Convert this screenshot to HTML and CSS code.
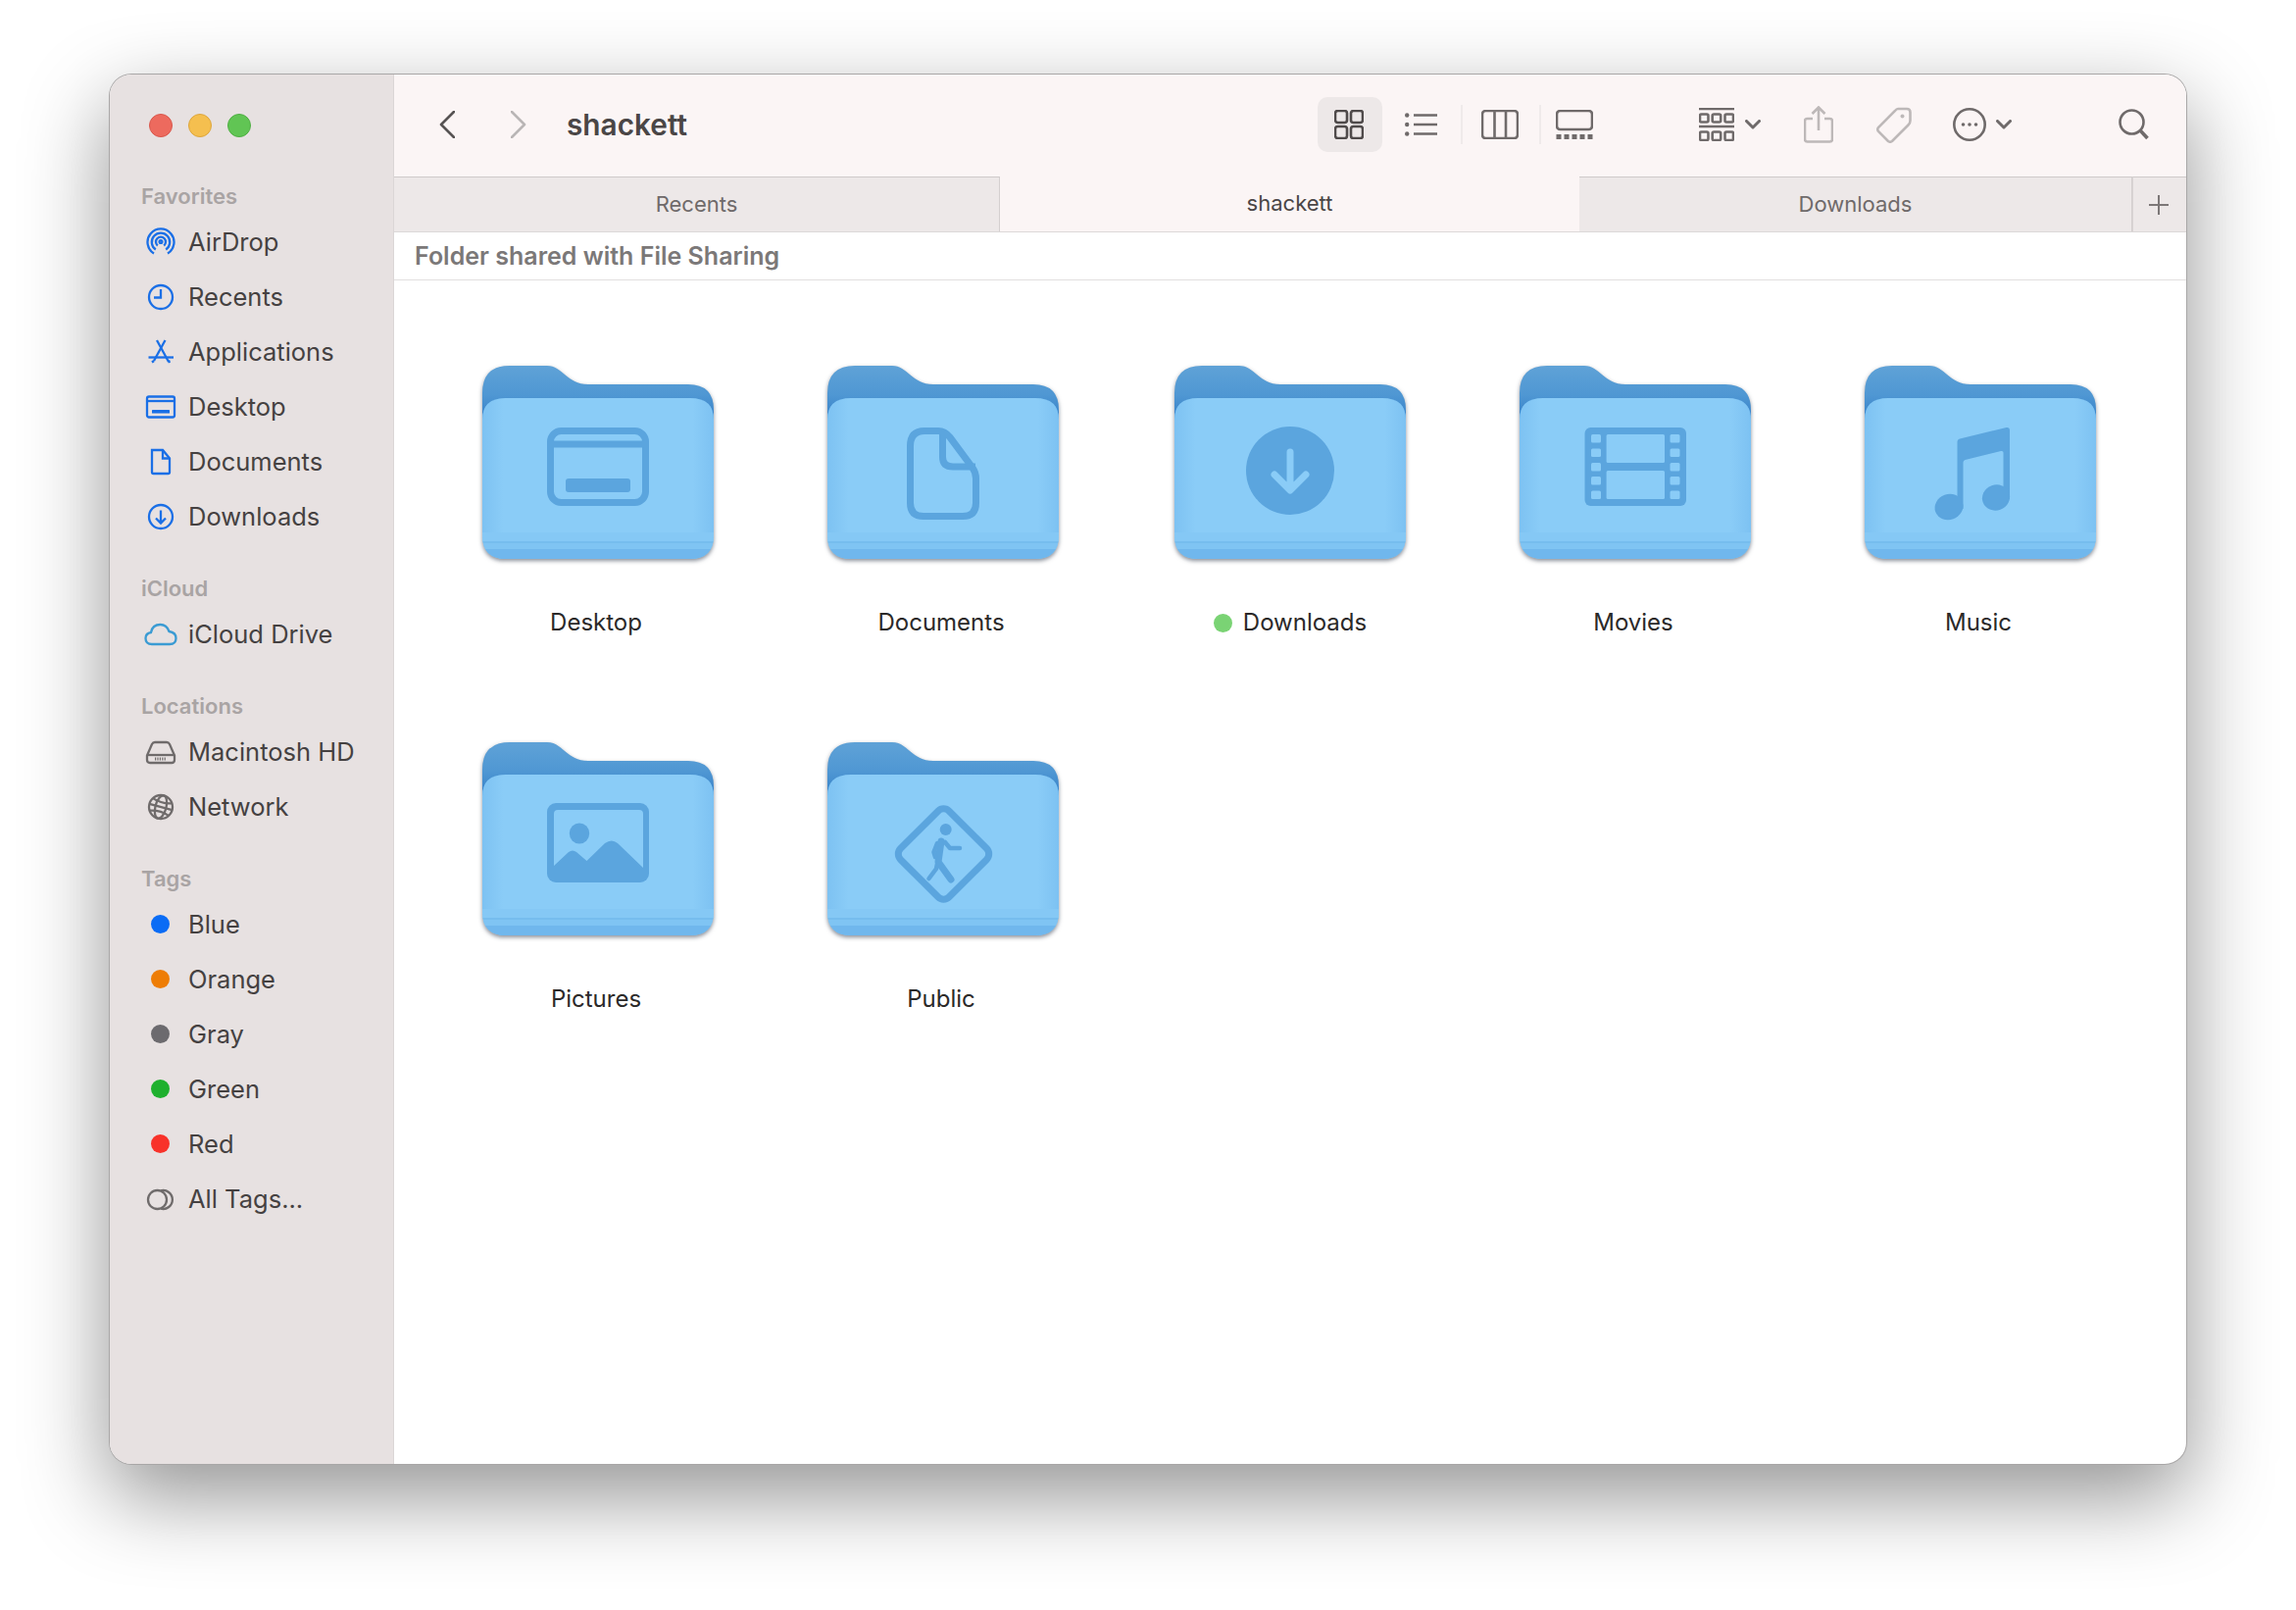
FILE: index.html
```html
<!DOCTYPE html>
<html lang="en">
<head>
<meta charset="UTF-8">
<meta name="viewport" content="width=device-width, initial-scale=1.0">
<title>shackett</title>
<link rel="stylesheet" href="styles.css">
</head>
<body>

<svg class="defs" aria-hidden="true">
    <defs>
        <linearGradient id="folderBack" x1="0" y1="0" x2="0" y2="1">
            <stop offset="0" stop-color="#5fa2d7"/>
            <stop offset="0.25" stop-color="#4f97d3"/>
            <stop offset="0.42" stop-color="#3a84ca"/>
            <stop offset="1" stop-color="#3a84ca"/>
        </linearGradient>
        <linearGradient id="folderSide" x1="0" y1="0" x2="1" y2="0">
            <stop offset="0" stop-color="#6db5ec" stop-opacity="0.45"/>
            <stop offset="0.09" stop-color="#6db5ec" stop-opacity="0"/>
            <stop offset="0.91" stop-color="#6db5ec" stop-opacity="0"/>
            <stop offset="1" stop-color="#6db5ec" stop-opacity="0.45"/>
        </linearGradient>
        <clipPath id="folderFront">
            <path d="M0 55Q0 33 24 33H212Q236 33 236 55V173Q236 197 212 197H24Q0 197 0 173Z"/>
        </clipPath>
        <symbol id="folder" viewBox="0 0 236 197">
            <path fill="url(#folderBack)" d="M0 28Q0 0 28 0H66C82 0 86 19 108 19H210Q236 19 236 45V120H0Z"/>
            <g clip-path="url(#folderFront)">
                <rect width="236" height="197" fill="#8accf7"/>
                <rect width="236" height="172" fill="url(#folderSide)"/>
                <rect y="170" width="236" height="9" fill="#85c8f5"/>
                <rect y="179" width="236" height="2" fill="#76bdee"/>
                <rect y="181" width="236" height="6" fill="#7fc4f3"/>
                <rect y="187" width="236" height="10" fill="#70b7ed"/>
            </g>
        </symbol>
    </defs>
</svg>

<div class="window">
    <aside class="sidebar">
        <div class="lights">
            <span class="light red"></span>
            <span class="light yellow"></span>
            <span class="light green"></span>
        </div>

        <h4>Favorites</h4>
        <div class="side-item">
            <svg class="side-icon" viewBox="0 0 30 30">
                <path d="M8 26.5A13.5 13.5 0 1 1 22 26.5"/>
                <path d="M9.8 22.5A9.2 9.2 0 1 1 20.2 22.5"/>
                <path d="M11.8 18.5A5 5 0 1 1 18.2 18.5"/>
                <circle cx="15" cy="14.5" r="1.4"/>
            </svg>
            <span>AirDrop</span>
        </div>
        <div class="side-item">
            <svg class="side-icon" viewBox="0 0 30 30">
                <circle cx="15" cy="15" r="12"/>
                <path d="M15 7V15.5H8"/>
            </svg>
            <span>Recents</span>
        </div>
        <div class="side-item">
            <svg class="side-icon" viewBox="0 0 30 30">
                <path d="M11 3L23 25"/>
                <path d="M19.5 3L8 24"/>
                <path d="M2.5 20.5H28"/>
                <path d="M6 25.5L8 24M24 26L23 23.5"/>
            </svg>
            <span>Applications</span>
        </div>
        <div class="side-item">
            <svg class="side-icon" viewBox="0 0 30 30">
                <rect x="1" y="4.5" width="28" height="21" rx="2"/>
                <path d="M1 9H29"/>
                <rect class="solid" x="6" y="18" width="18" height="3.5" rx="0.5"/>
            </svg>
            <span>Desktop</span>
        </div>
        <div class="side-item">
            <svg class="side-icon" viewBox="0 0 30 30">
                <path d="M6 3H17L24 11.5V25.5Q24 27 22.5 27H7.5Q6 27 6 25.5Z"/>
                <path d="M17 3V11.5H24"/>
            </svg>
            <span>Documents</span>
        </div>
        <div class="side-item">
            <svg class="side-icon" viewBox="0 0 30 30">
                <circle cx="15" cy="15" r="12"/>
                <path d="M15 8.5V21M10 16.5L15 21.5L20 16.5"/>
            </svg>
            <span>Downloads</span>
        </div>

        <h4>iCloud</h4>
        <div class="side-item">
            <svg class="side-icon cloud" viewBox="0 0 34 30">
                <path d="M8 25Q1.5 25 1.5 19Q1.5 14 7 13Q8.5 5 16.5 5Q23 5 25.5 12Q32.5 13 32.5 19Q32.5 25 26 25Z"/>
            </svg>
            <span>iCloud Drive</span>
        </div>

        <h4>Locations</h4>
        <div class="side-item">
            <svg class="side-icon gray" viewBox="0 0 30 30">
                <path d="M1 18.5L6 7Q7 5 9 5H21Q23 5 24 7L29 18.5V23Q29 26 26 26H4Q1 26 1 23Z"/>
                <path d="M1.5 18H28.5"/>
                <path d="M9 22H21" stroke-dasharray="1.2 1.2" stroke-width="3"/>
            </svg>
            <span>Macintosh HD</span>
        </div>
        <div class="side-item">
            <svg class="side-icon gray" viewBox="0 0 30 30">
                <circle cx="15" cy="15" r="12"/>
                <ellipse cx="15" cy="15" rx="5.5" ry="12" transform="rotate(15 15 15)"/>
                <path d="M3 15H27M5 8.5Q15 12 25 8.5M5 21.5Q15 18 25 21.5" transform="rotate(15 15 15)"/>
            </svg>
            <span>Network</span>
        </div>

        <h4 class="tags-head">Tags</h4>
        <div class="side-item"><span class="tag-slot"><i class="tag-dot blue"></i></span><span>Blue</span></div>
        <div class="side-item"><span class="tag-slot"><i class="tag-dot orange"></i></span><span>Orange</span></div>
        <div class="side-item"><span class="tag-slot"><i class="tag-dot graytag"></i></span><span>Gray</span></div>
        <div class="side-item"><span class="tag-slot"><i class="tag-dot greentag"></i></span><span>Green</span></div>
        <div class="side-item"><span class="tag-slot"><i class="tag-dot redtag"></i></span><span>Red</span></div>
        <div class="side-item">
            <svg class="side-icon gray" viewBox="0 0 30 30">
                <circle cx="11.5" cy="15.5" r="9.5"/>
                <path d="M15 6.3A9.5 9.5 0 1 1 15 24.7"/>
            </svg>
            <span>All Tags...</span>
        </div>
    </aside>

    <main class="main">
        <div class="toolbar">
            <svg class="nav-btn" viewBox="0 0 16 28"><path d="M15 1L2 14L15 27"/></svg>
            <svg class="nav-btn next" viewBox="0 0 16 28"><path d="M1 1L14 14L1 27"/></svg>
            <div class="title">shackett</div>

            <div class="view-on">
                <svg class="tool w30 dark" viewBox="0 0 30 30">
                    <rect x="1" y="1" width="12" height="12" rx="2.5"/>
                    <rect x="17" y="1" width="12" height="12" rx="2.5"/>
                    <rect x="1" y="17" width="12" height="12" rx="2.5"/>
                    <rect x="17" y="17" width="12" height="12" rx="2.5"/>
                </svg>
            </div>
            <svg class="tool w33 list-icon" viewBox="0 0 33 24">
                <path d="M9 2.5H33M9 12H33M9 21.5H33"/>
                <circle class="solid" cx="2.2" cy="2.5" r="2.2"/>
                <circle class="solid" cx="2.2" cy="12" r="2.2"/>
                <circle class="solid" cx="2.2" cy="21.5" r="2.2"/>
            </svg>
            <span class="tool-sep first"></span>
            <svg class="tool w38 cols-icon" viewBox="0 0 38 30">
                <rect x="1" y="1" width="36" height="28" rx="3.5"/>
                <path d="M13.5 1V29M25 1V29"/>
            </svg>
            <span class="tool-sep second"></span>
            <svg class="tool w38 gallery-icon" viewBox="0 0 38 30">
                <rect x="1" y="1" width="36" height="19" rx="3.5"/>
                <rect class="solid" x="0.5" y="25" width="5" height="5"/>
                <rect class="solid" x="8.5" y="25" width="5" height="5"/>
                <rect class="solid" x="16.5" y="25" width="5" height="5"/>
                <rect class="solid" x="24.5" y="25" width="5" height="5"/>
                <rect class="solid" x="32.5" y="25" width="5" height="5"/>
            </svg>

            <svg class="tool w36 group-icon" viewBox="0 0 36 34">
                <path d="M0 1H36M0 19H36"/>
                <rect x="1" y="6.5" width="8.5" height="8" rx="1.5"/>
                <rect x="13.7" y="6.5" width="8.5" height="8" rx="1.5"/>
                <rect x="26.5" y="6.5" width="8.5" height="8" rx="1.5"/>
                <rect x="1" y="24.5" width="8.5" height="8.5" rx="1.5"/>
                <rect x="13.7" y="24.5" width="8.5" height="8.5" rx="1.5"/>
                <rect x="26.5" y="24.5" width="8.5" height="8.5" rx="1.5"/>
            </svg>
            <svg class="chevron group-chevron" viewBox="0 0 16 10"><path d="M1.5 1.5L8 8L14.5 1.5"/></svg>

            <svg class="tool share-icon" viewBox="0 0 30 38">
                <path d="M9 13H3.5Q1 13 1 15.5V34Q1 36.5 3.5 36.5H26.5Q29 36.5 29 34V15.5Q29 13 26.5 13H21"/>
                <path d="M15 25V2M8.5 8L15 1.5L21.5 8"/>
            </svg>
            <svg class="tool tag-icon" viewBox="0 0 36 37">
                <path d="M22 2H31Q34.5 2 34.5 5.5V14Q34.5 16.5 32.5 18.5L16 35Q14 36.5 12 35L2 25Q0.5 23 2 21L19 4Q20.5 2 22 2Z"/>
                <circle class="solid" cx="26.5" cy="9.5" r="2"/>
            </svg>
            <svg class="tool more-icon" viewBox="0 0 34 34">
                <circle cx="17" cy="17" r="15.7"/>
                <circle class="solid" cx="10.5" cy="17" r="1.8"/>
                <circle class="solid" cx="17" cy="17" r="1.8"/>
                <circle class="solid" cx="23.5" cy="17" r="1.8"/>
            </svg>
            <svg class="chevron more-chevron" viewBox="0 0 16 10"><path d="M1.5 1.5L8 8L14.5 1.5"/></svg>
            <svg class="tool search-icon" viewBox="0 0 31 32">
                <circle cx="13.5" cy="13.5" r="12"/>
                <path d="M22.5 22.5L29.5 30" stroke-width="3.6"/>
            </svg>
        </div>

        <div class="tabs">
            <div class="tab">Recents</div>
            <div class="tab active">shackett</div>
            <div class="tab">Downloads</div>
            <div class="tab plus">
                <svg viewBox="0 0 22 22"><path d="M11 1V21M1 11H21"/></svg>
            </div>
        </div>

        <div class="infobar">Folder shared with File Sharing</div>

        <div class="content">
            <div class="item">
                <svg class="folder" viewBox="0 0 236 197">
                    <use href="#folder"/>
                    <g class="glyph">
                        <rect class="line" x="69.5" y="66.5" width="97" height="73" rx="11"/>
                        <path class="line" d="M70 80H166"/>
                        <rect x="85" y="115" width="66" height="14" rx="3"/>
                    </g>
                </svg>
                <div class="label">Desktop</div>
            </div>
            <div class="item">
                <svg class="folder" viewBox="0 0 236 197">
                    <use href="#folder"/>
                    <g class="glyph">
                        <path class="line" d="M84.5 82Q84.5 66.5 99 66.5H113Q120 66.5 125 73L148 104Q151.5 109 151.5 115V140Q151.5 153.5 138 153.5H98Q84.5 153.5 84.5 140Z"/>
                        <path class="line" d="M117.5 67V93Q117.5 103 128 103H151"/>
                    </g>
                </svg>
                <div class="label">Documents</div>
            </div>
            <div class="item">
                <svg class="folder" viewBox="0 0 236 197">
                    <use href="#folder"/>
                    <g class="glyph">
                        <circle cx="118" cy="107" r="45"/>
                        <path class="cut-line" d="M118 88V126M102 111L118 127L134 111"/>
                    </g>
                </svg>
                <div class="label tagged"><i class="label-dot"></i>Downloads</div>
            </div>
            <div class="item">
                <svg class="folder" viewBox="0 0 236 197">
                    <use href="#folder"/>
                    <g class="glyph">
                        <rect x="66.5" y="63" width="103.5" height="80" rx="6"/>
                        <g class="cut">
                            <rect x="88.6" y="70" width="59.4" height="29" rx="1.5"/>
                            <rect x="88.6" y="107" width="59.4" height="29" rx="1.5"/>
                            <rect x="73" y="70" width="10" height="8.5" rx="1.5"/>
                            <rect x="73" y="84.5" width="10" height="8.5" rx="1.5"/>
                            <rect x="73" y="99" width="10" height="8.5" rx="1.5"/>
                            <rect x="73" y="113" width="10" height="8.5" rx="1.5"/>
                            <rect x="73" y="127.5" width="10" height="8.5" rx="1.5"/>
                            <rect x="153.5" y="70" width="10" height="8.5" rx="1.5"/>
                            <rect x="153.5" y="84.5" width="10" height="8.5" rx="1.5"/>
                            <rect x="153.5" y="99" width="10" height="8.5" rx="1.5"/>
                            <rect x="153.5" y="113" width="10" height="8.5" rx="1.5"/>
                            <rect x="153.5" y="127.5" width="10" height="8.5" rx="1.5"/>
                        </g>
                    </g>
                </svg>
                <div class="label">Movies</div>
            </div>
            <div class="item">
                <svg class="folder" viewBox="0 0 236 197">
                    <use href="#folder"/>
                    <g class="glyph">
                        <path d="M94.5 78Q94.5 75 97 74.5L144.5 63Q148 62.5 148 66V136H141.5V88.5Q141.5 86.5 139 87L102.5 96Q100.5 96.5 100.5 98.5V146H94.5Z"/>
                        <ellipse cx="86" cy="144" rx="14.6" ry="13" transform="rotate(-20 86 144)"/>
                        <ellipse cx="134" cy="134.5" rx="14.2" ry="13" transform="rotate(-20 134 134.5)"/>
                    </g>
                </svg>
                <div class="label">Music</div>
            </div>
            <div class="item">
                <svg class="folder" viewBox="0 0 236 197">
                    <use href="#folder"/>
                    <g class="glyph">
                        <rect x="66" y="62" width="104" height="81" rx="9"/>
                        <rect class="cut" x="73" y="69" width="91" height="68" rx="4"/>
                        <ellipse cx="99" cy="93" rx="10.2" ry="10.5"/>
                        <path d="M73 126L88 112Q92 109 96 112L106.5 121L125 103Q132 98 138 103L164 128V137H73Z"/>
                    </g>
                </svg>
                <div class="label">Pictures</div>
            </div>
            <div class="item">
                <svg class="folder" viewBox="0 0 236 197">
                    <use href="#folder"/>
                    <g class="glyph">
                        <rect class="line" x="83.5" y="79" width="70" height="70" rx="8" transform="rotate(45 118.5 114)"/>
                        <circle cx="120.7" cy="89" r="6"/>
                        <path class="limb" d="M116 101L113 122L126 140"/>
                        <path class="limb thin" d="M112 124L111 129L103.5 139"/>
                        <path class="limb thin" d="M120 102L125 108H135"/>
                        <path class="limb thin" d="M112 103L108.5 112L110 117"/>
                    </g>
                </svg>
                <div class="label">Public</div>
            </div>
        </div>
    </main>
</div>

</body>
</html>
```

FILE: styles.css
```css
* {
    box-sizing: border-box;
}
html, body {
    margin: 0;
    padding: 0;
}
body {
    width: 2342px;
    height: 1642px;
    background-color: #fff;
    font-family: Inter, "Liberation Sans", sans-serif;
    padding: 76px 112px 0;
    overflow: hidden;
}
.defs {
    display: block;
    width: 0;
    height: 0;
}
.window {
    display: flex;
    width: 2118px;
    height: 1417px;
    border-radius: 22px;
    background-color: #fff;
    overflow: hidden;
    box-shadow: 0 0 0 1px #a9a7a7, 0 32px 85px 2px rgba(0, 0, 0, 0.42);
}

/* sidebar */
.sidebar {
    width: 290px;
    flex: none;
    background-color: #e7e1e1;
    border-right: 1px solid #dbd6d6;
    padding: 40px 0 0 33px;
}
.lights {
    display: flex;
    gap: 16px;
    margin: 0 0 44px 7px;
}
.light {
    width: 24px;
    height: 24px;
    border-radius: 50%;
}
.light.red { background-color: #ed6a5e; border: 1px solid #d9574c; }
.light.yellow { background-color: #f5bf4f; border: 1px solid #dda63d; }
.light.green { background-color: #61c554; border: 1px solid #4fae43; }
.sidebar h4 {
    margin: 29px 0 3px -1px;
    font-size: 22px;
    line-height: 32px;
    font-weight: 600;
    color: #a9a4a4;
}
.lights + h4 {
    margin-top: 0;
}
.side-item {
    display: flex;
    align-items: center;
    height: 56px;
    padding-bottom: 1px;
    font-size: 25.5px;
    color: #454141;
}
.side-icon {
    flex: none;
    width: 36px;
    height: 30px;
    margin: 0 10px 0 1px;
    fill: none;
    stroke: #1a6fe6;
    stroke-width: 2.3;
}
.side-icon .solid {
    fill: #1a6fe6;
    stroke: none;
}
.side-icon.cloud {
    stroke: #3b9bd3;
}
.side-icon.gray {
    stroke: #6f6b6b;
}
.tag-slot {
    flex: none;
    display: flex;
    justify-content: center;
    width: 36px;
    margin-right: 11px;
}
.tag-dot {
    display: block;
    width: 19px;
    height: 19px;
    border-radius: 50%;
}
.tag-dot.blue { background-color: #0a6cf5; }
.tag-dot.orange { background-color: #ee7d05; }
.tag-dot.graytag { background-color: #6c6a6e; }
.tag-dot.greentag { background-color: #1fb02e; }
.tag-dot.redtag { background-color: #f8322a; }

/* main column */
.main {
    flex: 1;
    display: flex;
    flex-direction: column;
    min-width: 0;
}
.toolbar {
    display: flex;
    align-items: center;
    height: 104px;
    padding: 0 38px 2px 46px;
    background-color: #fbf5f5;
}
.nav-btn {
    width: 16px;
    height: 28px;
    fill: none;
    stroke: #575353;
    stroke-width: 2.6;
    stroke-linecap: round;
    stroke-linejoin: round;
}
.nav-btn.next {
    margin-left: 57px;
    stroke: #b9b5b5;
}
.title {
    margin-left: 41px;
    font-size: 29.8px;
    font-weight: 600;
    color: #4a4646;
}
.view-on {
    display: flex;
    align-items: center;
    justify-content: center;
    width: 66px;
    height: 56px;
    margin-left: auto;
    padding-right: 2px;
    border-radius: 10px;
    background-color: #ede8e8;
}
.tool {
    flex: none;
    fill: none;
    stroke: #6f6a6a;
    stroke-width: 2.6;
}
.tool .solid {
    fill: #6f6a6a;
    stroke: none;
}
.tool.dark {
    stroke: #4f4a4a;
}
.w30 { width: 30px; height: 30px; }
.w33 { width: 33px; height: 24px; }
.w36 { width: 36px; height: 34px; }
.w38 { width: 38px; height: 30px; }
.list-icon { margin-left: 23px; }
.tool-sep {
    flex: none;
    width: 2px;
    height: 40px;
    background-color: #efeaea;
}
.tool-sep.first { margin-left: 24px; }
.tool-sep.second { margin-left: 21px; }
.cols-icon { margin-left: 19px; }
.gallery-icon { margin-left: 15px; }
.group-icon { margin-left: 108px; }
.chevron {
    flex: none;
    width: 16px;
    height: 10px;
    fill: none;
    stroke: #6f6a6a;
    stroke-width: 3;
    stroke-linecap: round;
    stroke-linejoin: round;
}
.group-chevron { margin-left: 11px; }
.share-icon {
    width: 30px;
    height: 38px;
    margin-left: 44px;
    stroke: #bdb8b8;
}
.tag-icon {
    width: 36px;
    height: 37px;
    margin-left: 44px;
    stroke: #bdb8b8;
}
.tag-icon .solid {
    fill: #bdb8b8;
}
.more-icon {
    width: 34px;
    height: 34px;
    margin-left: 42px;
}
.more-chevron { margin-left: 10px; }
.search-icon {
    width: 31px;
    height: 32px;
    margin-left: 109px;
}

/* tabs */
.tabs {
    display: grid;
    grid-template-columns: 618px 591px 564px 55px;
    height: 57px;
    border-bottom: 1px solid #dcd8d8;
    background-color: #fbf5f5;
}
.tab {
    display: flex;
    align-items: center;
    justify-content: center;
    padding-bottom: 2px;
    font-size: 22px;
    color: #6f6a6a;
    background-color: #ede8e8;
    border-top: 1px solid #cfcaca;
    border-right: 1px solid #d4cfcf;
}
.tab.active {
    background-color: #fbf5f5;
    border-top: none;
    border-right: none;
    color: #4a4646;
}
.tab.plus {
    padding-bottom: 0;
    padding-right: 2px;
    border-right: none;
    border-left: 1px solid #d9d4d4;
}
.tab.plus svg {
    width: 22px;
    height: 22px;
    fill: none;
    stroke: #7c7777;
    stroke-width: 2;
}
.infobar {
    height: 49px;
    padding-left: 21px;
    line-height: 48px;
    font-size: 25px;
    font-weight: 600;
    color: #7b7878;
    border-bottom: 1px solid #e2dfdf;
}

/* folders */
.content {
    display: grid;
    grid-template-columns: 352px 352px 356px 348px 356px;
    grid-auto-rows: 384px;
    padding: 87px 0 0 32px;
}
.item {
    display: flex;
    flex-direction: column;
    align-items: center;
}
.folder {
    width: 236px;
    height: 197px;
    overflow: visible;
    filter: drop-shadow(0 2px 2px rgba(20, 30, 50, 0.5));
}
.glyph {
    fill: #5ba5de;
}
.glyph .line {
    fill: none;
    stroke: #5ba5de;
    stroke-width: 7;
}
.glyph .cut {
    fill: #8accf7;
}
.glyph .cut-line {
    fill: none;
    stroke: #8accf7;
    stroke-width: 7;
    stroke-linecap: round;
    stroke-linejoin: round;
}
.glyph .limb {
    fill: none;
    stroke: #5ba5de;
    stroke-width: 7;
    stroke-linecap: round;
    stroke-linejoin: round;
}
.glyph .limb.thin {
    stroke-width: 4.5;
}
.label {
    display: flex;
    align-items: center;
    margin-top: 49px;
    padding-right: 4px;
    line-height: 32px;
    font-size: 24px;
    color: #2b2929;
}
.label.tagged {
    padding-right: 0;
}
.label-dot {
    width: 19px;
    height: 19px;
    margin-right: 11px;
    border-radius: 50%;
    background-color: #7ad374;
}
```
